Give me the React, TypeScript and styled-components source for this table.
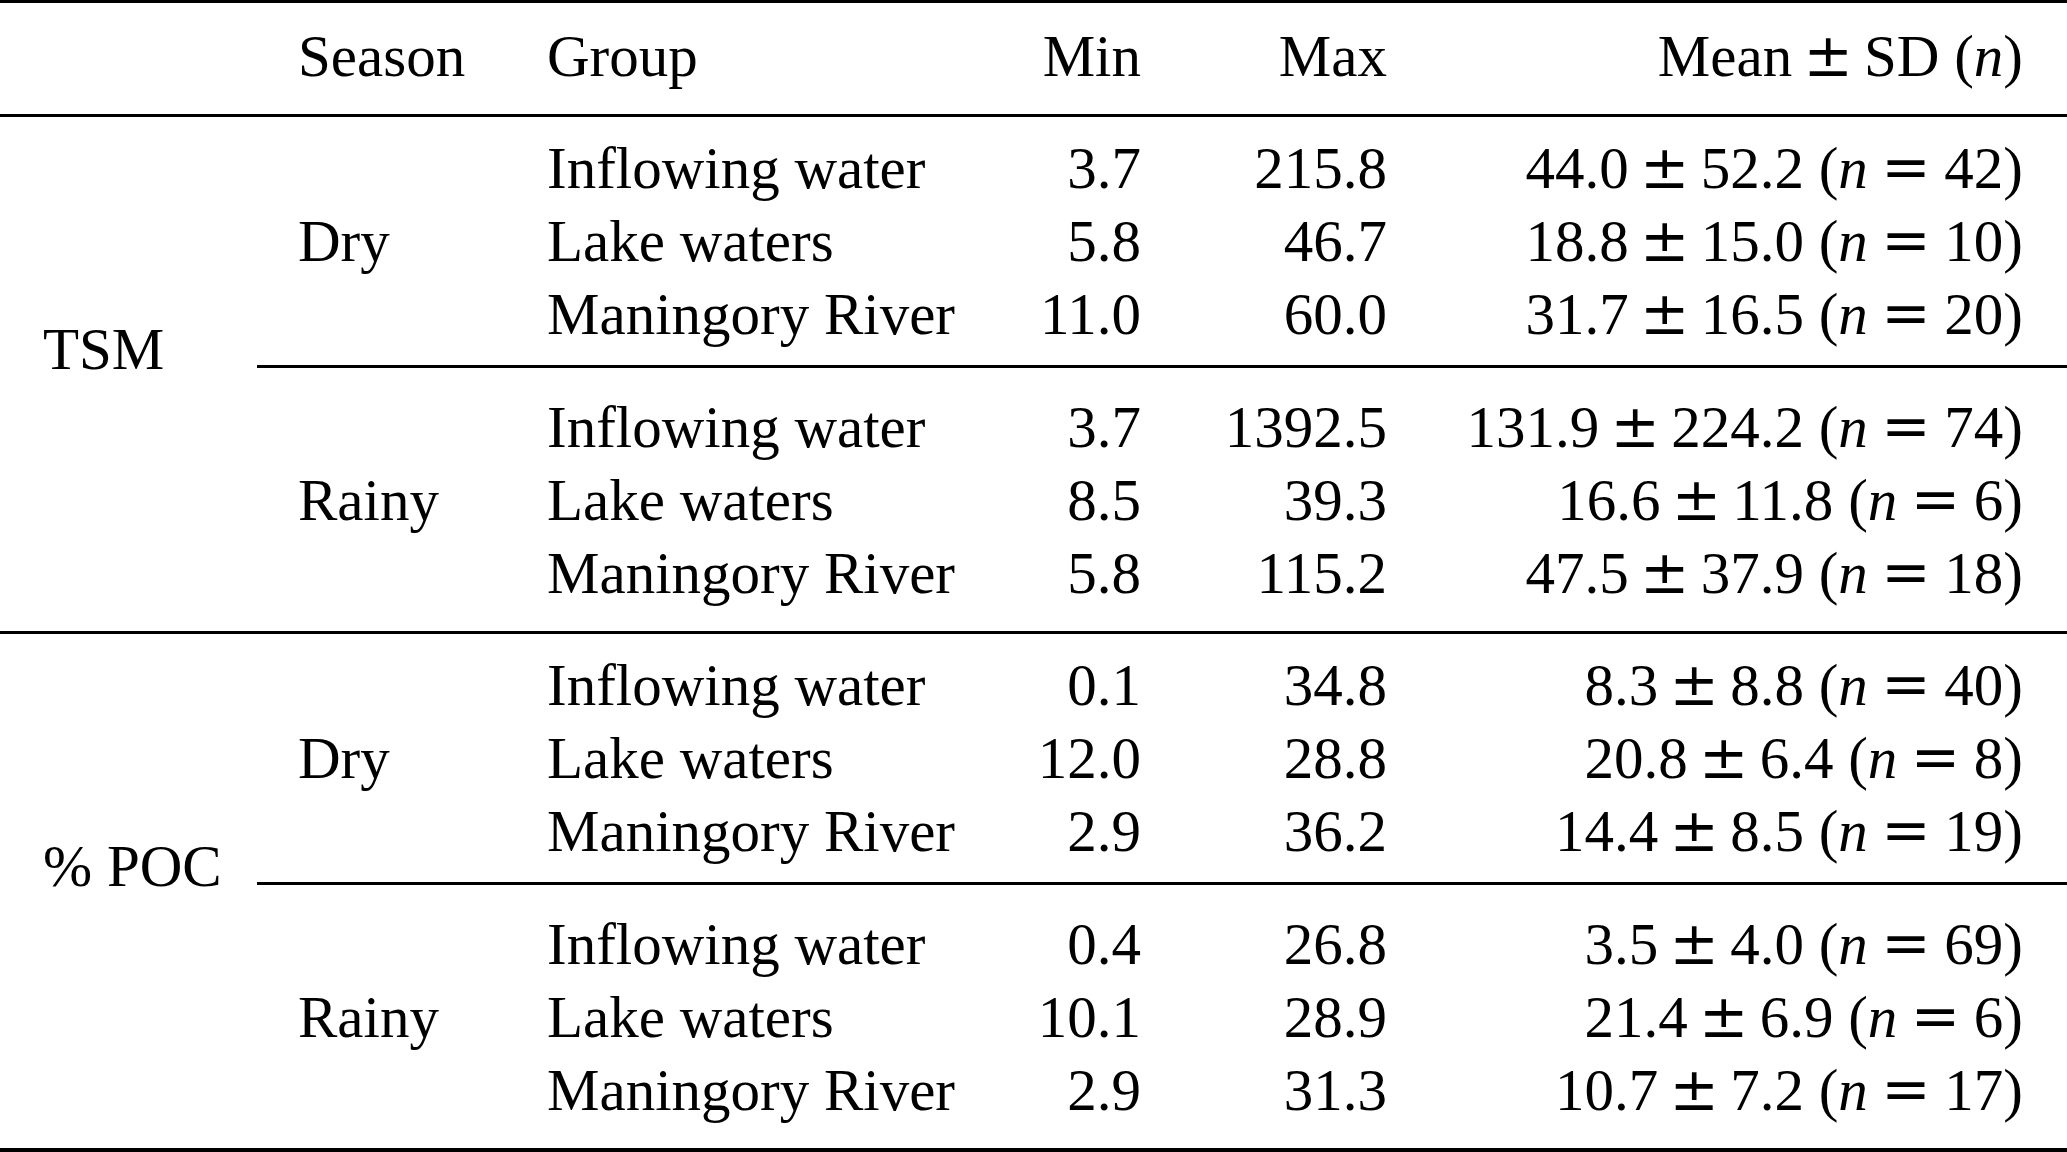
import React from 'react';
import styled, {createGlobalStyle} from 'styled-components';

type Row = [string, string, string, string, string, string];

interface ISeason {
    name: string;
    rows: Row[];
}

interface ISection {
    label: string;
    seasons: ISeason[];
}

const SECTIONS: ISection[] = [
    {
        label: 'TSM',
        seasons: [
            {
                name: 'Dry',
                rows: [
                    ['Inflowing water', '3.7', '215.8', '44.0', '52.2', '42'],
                    ['Lake waters', '5.8', '46.7', '18.8', '15.0', '10'],
                    ['Maningory River', '11.0', '60.0', '31.7', '16.5', '20'],
                ],
            },
            {
                name: 'Rainy',
                rows: [
                    ['Inflowing water', '3.7', '1392.5', '131.9', '224.2', '74'],
                    ['Lake waters', '8.5', '39.3', '16.6', '11.8', '6'],
                    ['Maningory River', '5.8', '115.2', '47.5', '37.9', '18'],
                ],
            },
        ],
    },
    {
        label: '% POC',
        seasons: [
            {
                name: 'Dry',
                rows: [
                    ['Inflowing water', '0.1', '34.8', '8.3', '8.8', '40'],
                    ['Lake waters', '12.0', '28.8', '20.8', '6.4', '8'],
                    ['Maningory River', '2.9', '36.2', '14.4', '8.5', '19'],
                ],
            },
            {
                name: 'Rainy',
                rows: [
                    ['Inflowing water', '0.4', '26.8', '3.5', '4.0', '69'],
                    ['Lake waters', '10.1', '28.9', '21.4', '6.9', '6'],
                    ['Maningory River', '2.9', '31.3', '10.7', '7.2', '17'],
                ],
            },
        ],
    },
];

const GlobalStyle = createGlobalStyle`
    html, body {
        margin: 0;
        padding: 0;
        background: #fff;
    }
    body {
        font-family: "Liberation Serif", "Times New Roman", serif;
        color: #000;
    }
`;

const Table = styled.div`
    width: 2067px;
    height: 1152px;
    display: flex;
    flex-direction: column;
    font-size: 59px;
    line-height: 73px;
    white-space: nowrap;
    overflow: hidden;
`;

const HeaderRow = styled.div`
    display: grid;
    grid-template-columns: 257px 290px 420px 174px 246px 636px;
    padding: 17px 44px 21px 0;
    border-top: 3px solid #000;
    border-bottom: 3px solid #000;
`;

const Cell = styled.div<{ $right?: boolean; $indent?: number }>`
    text-align: ${props => (props.$right ? 'right' : 'left')};
    padding-left: ${props => props.$indent || 0}px;
`;

const Section = styled.div<{ $rule: number }>`
    display: flex;
    border-bottom: ${props => props.$rule}px solid #000;
`;

const VariableCell = styled.div`
    width: 257px;
    flex-shrink: 0;
    box-sizing: border-box;
    padding: 0 0 50px 43px;
    display: flex;
    align-items: center;
`;

const SeasonStack = styled.div`
    flex: 1;
    display: flex;
    flex-direction: column;
`;

const SeasonBlock = styled.div<{ $first: boolean }>`
    display: flex;
    padding: ${props => (props.$first ? '15px 0 14px' : '23px 0 21px')};
    border-top: ${props => (props.$first ? 'none' : '3px solid #000')};
`;

const SeasonCell = styled.div`
    width: 290px;
    flex-shrink: 0;
    box-sizing: border-box;
    padding-left: 41px;
    display: flex;
    align-items: center;
`;

const DataRows = styled.div`
    display: grid;
    grid-template-columns: 420px 174px 246px 636px;
    padding-right: 44px;
`;

// math symbols (± and =) are wider than the text glyphs, as in the typeset table
const MathSymbol = styled.span<{ $gap: number }>`
    font-family: "DejaVu Serif", serif;
    line-height: 1;
    margin: 0 ${props => props.$gap}em;
`;

const MathVar = styled.span`
    font-style: italic;
`;

const Stat: React.FC<{ mean: string; sd: string; n: string }> = ({mean, sd, n}) => (
    <>
        {mean}<MathSymbol $gap={0.19}>±</MathSymbol>{sd} (<MathVar>n</MathVar><MathSymbol $gap={0.23}>=</MathSymbol>{n})
    </>
);

const App: React.FC = () => (
    <>
        <GlobalStyle/>
        <Table>
            <HeaderRow>
                <Cell/>
                <Cell $indent={41}>Season</Cell>
                <Cell>Group</Cell>
                <Cell $right>Min</Cell>
                <Cell $right>Max</Cell>
                <Cell $right>
                    Mean<MathSymbol $gap={0.19}>±</MathSymbol>SD (<MathVar>n</MathVar>)
                </Cell>
            </HeaderRow>
            {
                SECTIONS.map((section, sectionIndex) => (
                    <Section key={section.label} $rule={sectionIndex === SECTIONS.length - 1 ? 4 : 3}>
                        <VariableCell>{section.label}</VariableCell>
                        <SeasonStack>
                            {
                                section.seasons.map((season, seasonIndex) => (
                                    <SeasonBlock key={season.name} $first={seasonIndex === 0}>
                                        <SeasonCell>{season.name}</SeasonCell>
                                        <DataRows>
                                            {
                                                season.rows.map(([group, min, max, mean, sd, n]) => (
                                                    <React.Fragment key={group}>
                                                        <Cell>{group}</Cell>
                                                        <Cell $right>{min}</Cell>
                                                        <Cell $right>{max}</Cell>
                                                        <Cell $right>
                                                            <Stat mean={mean} sd={sd} n={n}/>
                                                        </Cell>
                                                    </React.Fragment>
                                                ))
                                            }
                                        </DataRows>
                                    </SeasonBlock>
                                ))
                            }
                        </SeasonStack>
                    </Section>
                ))
            }
        </Table>
    </>
);

export default App;
